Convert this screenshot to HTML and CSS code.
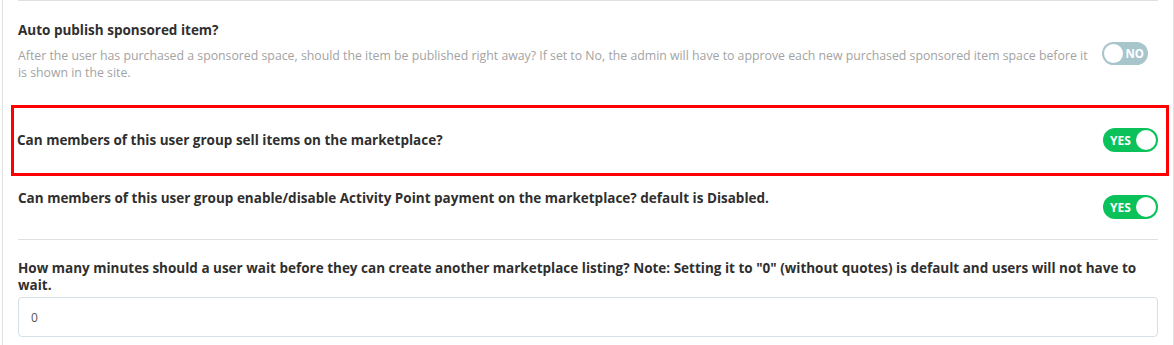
FILE: index.html
```html
<!DOCTYPE html>
<html lang="en">
<head>
    <meta charset="UTF-8">
    <title>User Group Settings</title>
    <link rel="stylesheet" href="styles.css">
</head>
<body>
<div class="panel">
    <div class="divider"></div>

    <div class="setting first">
        <div class="setting-text">
            <h4>Auto publish sponsored item?</h4>
            <p class="help">After the user has purchased a sponsored space, should the item be published right away? If set to No, the admin will have to approve each new purchased sponsored item space before it is shown in the site.</p>
        </div>
        <span class="toggle off"><span class="knob"></span><span class="label">NO</span></span>
    </div>

    <div class="highlight">
        <div class="setting row-sell">
            <h4>Can members of this user group sell items on the marketplace?</h4>
            <span class="toggle on"><span class="label">YES</span><span class="knob"></span></span>
        </div>
    </div>

    <div class="setting row-points">
        <h4>Can members of this user group enable/disable Activity Point payment on the marketplace? default is Disabled.</h4>
        <span class="toggle on"><span class="label">YES</span><span class="knob"></span></span>
    </div>

    <div class="divider"></div>

    <div class="setting-block">
        <h4>How many minutes should a user wait before they can create another marketplace listing? Note: Setting it to "0" (without quotes) is default and users will not have to wait.</h4>
        <input type="text" class="field" value="0">
    </div>
</div>
</body>
</html>
```

FILE: styles.css
```css
body {
    margin: 0;
    background-color: #fff;
    font-family: "Open Sans", "Liberation Sans", sans-serif;
    color: #333;
}
.panel {
    margin-left: 2px;
    width: 1141px;
    padding: 0 15px 0 14px;
    border-left: 1px solid #e2e2e2;
    border-right: 1px solid #e2e2e2;
    height: 345px;
    box-sizing: content-box;
}
.divider {
    height: 1px;
    background-color: #e0e0e0;
    margin-left: 1px;
}
h4 {
    margin: 0;
    font-size: 13.5px;
    line-height: 17px;
    font-weight: bold;
    color: #2f2f2f;
}
.setting {
    display: flex;
    justify-content: space-between;
    align-items: flex-start;
    padding-left: 1px;
}
.setting.first {
    padding-top: 21px;
}
.setting-text {
    flex: 1;
}
.help {
    margin: 8px 0 0;
    font-size: 12.3px;
    line-height: 17px;
    color: #a3a3a3;
}
.setting.first .toggle {
    margin: 20px 10px 0 4px;
}
.highlight {
    margin: 24px -11px 0 -6px;
    border: 3px solid #f00;
    padding: 20px 8px 21px 2px;
}
.row-sell {
    align-items: center;
}
.row-points {
    padding-top: 13px;
    padding-bottom: 20px;
}
.row-points h4 {
    margin-top: 1px;
}
.row-points .toggle {
    margin-top: 6px;
}
.toggle {
    display: inline-flex;
    align-items: center;
    flex-shrink: 0;
    border-radius: 12px;
    box-sizing: border-box;
    color: #fff;
    font-weight: bold;
    font-size: 12px;
}
.toggle.on {
    width: 55px;
    height: 24px;
    background-color: #0bc15a;
    padding: 0 2px 0 7px;
    justify-content: space-between;
}
.toggle.off {
    width: 46px;
    height: 23px;
    background-color: #a9c5cc;
    padding: 0 4px 0 2px;
    justify-content: space-between;
    font-size: 11.5px;
}
.knob {
    width: 20px;
    height: 20px;
    border-radius: 50%;
    background-color: #fff;
}
.toggle.off .knob {
    width: 19px;
    height: 19px;
}
.setting-block {
    padding: 20px 0 0 1px;
}
.field {
    display: block;
    margin-top: 3px;
    width: 100%;
    height: 40px;
    box-sizing: border-box;
    padding: 0 12px;
    border: 1px solid #d5e1e8;
    border-radius: 4px;
    font-family: "Open Sans", "Liberation Sans", sans-serif;
    font-size: 12px;
    color: #555;
}
```
